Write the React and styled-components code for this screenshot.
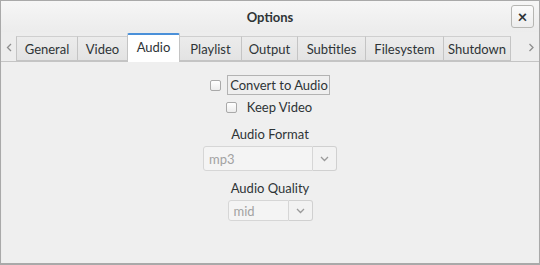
import React from "react";
import styled, { createGlobalStyle } from "styled-components";

const TABS = [
  { name: "General", width: 62 },
  { name: "Video", width: 51 },
  { name: "Audio", width: 53 },
  { name: "Playlist", width: 63 },
  { name: "Output", width: 57 },
  { name: "Subtitles", width: 69 },
  { name: "Filesystem", width: 79 },
  { name: "Shutdown", width: 68 },
];

const App = () => {
  return (
    <>
      <GlobalStyle />
      <Window>
        <TitleBar>
          <Title>Options</Title>
          <CloseButton>×</CloseButton>
        </TitleBar>

        <TabStrip>
          <Arrow>
            <ArrowIcon d="M5 1 L1.5 4.5 L5 8" />
          </Arrow>
          <Tabs>
            {TABS.map((tab) => (
              <Tab key={tab.name} $width={tab.width} $active={tab.name === "Audio"}>
                {tab.name}
              </Tab>
            ))}
          </Tabs>
          <Arrow>
            <ArrowIcon d="M1.5 1 L5 4.5 L1.5 8" />
          </Arrow>
        </TabStrip>

        <Panel>
          <CheckRow>
            <CheckBox />
            <CheckLabel $focused>Convert to Audio</CheckLabel>
          </CheckRow>
          <CheckRow $gap={2}>
            <CheckBox />
            <CheckLabel>Keep Video</CheckLabel>
          </CheckRow>

          <FieldLabel>Audio Format</FieldLabel>
          <Combo $height={25}>
            <ComboEntry $width={110}>mp3</ComboEntry>
            <ComboButton>
              <Chevron />
            </ComboButton>
          </Combo>

          <FieldLabel>Audio Quality</FieldLabel>
          <Combo $height={21}>
            <ComboEntry $width={61}>mid</ComboEntry>
            <ComboButton>
              <Chevron />
            </ComboButton>
          </Combo>
        </Panel>
      </Window>
    </>
  );
};

export default App;

const ArrowIcon = ({ d }) => (
  <svg width="7" height="9" viewBox="0 0 7 9">
    <path d={d} fill="none" stroke="#8e8e8e" strokeWidth="1.3" />
  </svg>
);

const Chevron = () => (
  <svg width="9" height="6" viewBox="0 0 9 6">
    <path d="M1 1 L4.5 4.5 L8 1" fill="none" stroke="#9a9a9a" strokeWidth="1.3" />
  </svg>
);

const GlobalStyle = createGlobalStyle`
  body {
    margin: 0;
    background: #ffffff;
    font-family: Lato, "Noto Sans", sans-serif;
  }
`;

const Window = styled.div`
  box-sizing: border-box;
  width: 540px;
  height: 265px;
  border: 1px solid #a9a9a9;
  border-bottom-width: 2px;
  background: #ededed;
  display: flex;
  flex-direction: column;
`;

const TitleBar = styled.div`
  height: 31px;
  flex-shrink: 0;
  position: relative;
  display: flex;
  align-items: center;
  justify-content: center;
  background: linear-gradient(#f6f6f6, #ececec);
`;

const Title = styled.div`
  font-size: 13px;
  font-weight: 700;
  color: #2e3436;
`;

const CloseButton = styled.div`
  position: absolute;
  right: 5px;
  top: 4px;
  box-sizing: border-box;
  width: 23px;
  height: 23px;
  border: 1px solid #b6b6b3;
  border-radius: 3px;
  background: linear-gradient(#fbfbfb, #ededed);
  display: flex;
  align-items: center;
  justify-content: center;
  font-size: 17px;
  font-weight: 700;
  line-height: 1;
  color: #2e3436;
`;

const TabStrip = styled.div`
  height: 29px;
  flex-shrink: 0;
  display: flex;
  align-items: flex-end;
  border-bottom: 1px solid #c4c4c4;
`;

const Arrow = styled.div`
  width: 16px;
  height: 100%;
  display: flex;
  align-items: center;
  justify-content: center;
  padding-top: 2px;
  box-sizing: border-box;
`;

const Tabs = styled.div`
  flex: 1;
  display: flex;
  align-items: flex-end;
  height: 100%;
`;

const Tab = styled.div`
  box-sizing: border-box;
  flex: 0 0 ${(p) => p.$width}px;
  height: ${(p) => (p.$active ? "29px" : "25px")};
  margin-bottom: ${(p) => (p.$active ? "-1px" : "0")};
  padding-bottom: ${(p) => (p.$active ? "3px" : "0")};
  display: flex;
  align-items: center;
  justify-content: center;
  font-size: 13px;
  color: #2e3436;
  background: ${(p) => (p.$active ? "#ffffff" : "linear-gradient(#ececec, #e3e3e3)")};
  border: 1px solid #c4c4c4;
  border-top: ${(p) => (p.$active ? "2px solid #4a90d9" : "1px solid #cfcfcf")};
  border-bottom: ${(p) => (p.$active ? "none" : "1px solid #c4c4c4")};
  border-radius: ${(p) => (p.$active ? "2px 2px 0 0" : "0")};
  margin-left: -1px;
`;

const Panel = styled.div`
  flex: 1;
  margin: 0 1px;
  background: #efefef;
  display: flex;
  flex-direction: column;
  align-items: center;
  padding-top: 13px;
`;

const CheckRow = styled.div`
  display: flex;
  align-items: center;
  gap: 6px;
  height: 20px;
  margin-top: ${(p) => p.$gap || 0}px;
`;

const CheckBox = styled.div`
  box-sizing: border-box;
  width: 11px;
  height: 11px;
  border: 1px solid #a9a9a9;
  border-radius: 2px;
  background: linear-gradient(#ffffff, #ececec);
`;

const CheckLabel = styled.div`
  box-sizing: border-box;
  height: 20px;
  padding: 0 1px 0 2px;
  display: flex;
  align-items: center;
  font-size: 13px;
  color: #2e3436;
  border: 1px solid ${(p) => (p.$focused ? "#b3b3b3" : "transparent")};
  margin-left: ${(p) => (p.$focused ? "0" : "1px")};
`;

const FieldLabel = styled.div`
  margin-top: 9px;
  height: 16px;
  line-height: 16px;
  font-size: 13px;
  color: #2e3436;
`;

const Combo = styled.div`
  display: flex;
  height: ${(p) => p.$height}px;
  margin-top: 4px;
`;

const ComboEntry = styled.div`
  box-sizing: border-box;
  width: ${(p) => p.$width}px;
  height: 100%;
  padding-left: 5px;
  display: flex;
  align-items: center;
  font-size: 13px;
  color: #a2a2a2;
  background: #f4f4f4;
  border: 1px solid #d6d6d6;
  border-radius: 3px 0 0 3px;
`;

const ComboButton = styled.div`
  box-sizing: border-box;
  width: 24px;
  height: 100%;
  display: flex;
  align-items: center;
  justify-content: center;
  background: #f2f2f2;
  border: 1px solid #d0d0d0;
  border-left: none;
  border-radius: 0 3px 3px 0;
`;
